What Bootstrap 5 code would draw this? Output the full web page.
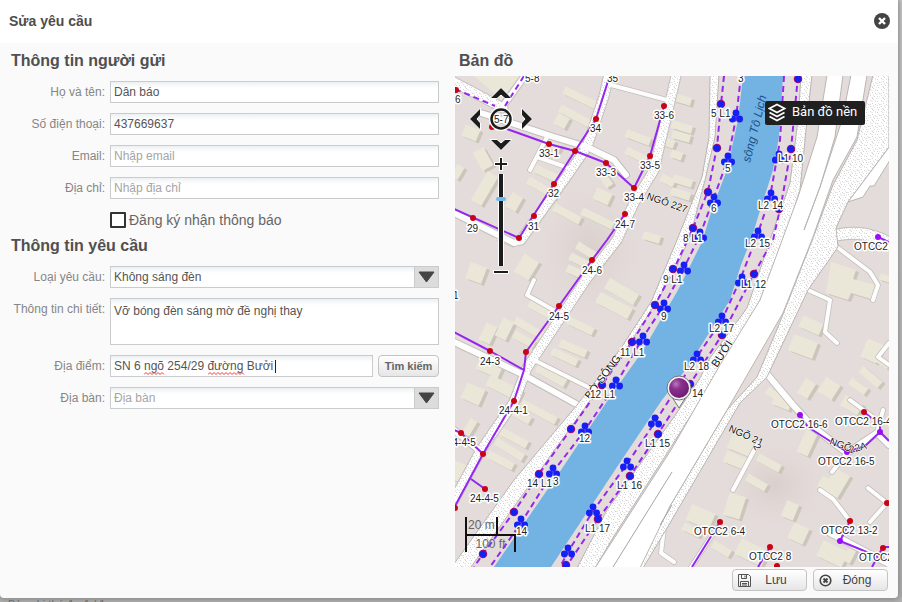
<!DOCTYPE html>
<html lang="vi">
<head>
<meta charset="utf-8">
<meta name="viewport" content="width=device-width, initial-scale=1">
<title>Sửa yêu cầu</title>
<link rel="stylesheet" href="https://cdn.jsdelivr.net/npm/bootstrap@5.3.0/dist/css/bootstrap.min.css">
<style>
body { font-family: "Liberation Sans", Arial, sans-serif; font-size: 12px; line-height: 16px; color: #555; background: linear-gradient(#d4d4d4, #b4b4b4); }
.dialog { margin-right: 4px; background: #fafafa; border-radius: 0 0 4px 4px; box-shadow: 0 0 6px 2px #888; }
.dialog-head { height: 43px; padding: 0 8px 2px 9px; background: #fff; }
.dialog-title { font-size: 14px; line-height: 20px; font-weight: 700; color: #4d4d4d; margin: 0; }
.form-side { padding: 8px 10px 0 11px; }
.map-side { padding: 8px 9px 0 6px; }
.section-title { font-size: 16px; line-height: 20px; font-weight: 700; color: #505050; margin: 0 0 10px; }
.map-side .section-title { margin: 0 0 5px 4px; }
.field { display: grid; grid-template-columns: 94px minmax(0, 1fr); column-gap: 5px; margin-bottom: 10px; }
.field-label { color: #868686; text-align: right; line-height: 22px; white-space: nowrap; justify-self: end; }
.field .form-control, .field .form-select { height: 22px; font-size: 12px; line-height: 16px; color: #555; padding: 2px 3px; border: 1px solid #c9cccf; border-radius: 0; background-color: #fff; background-image: linear-gradient(#edf0f2, #fff 6px); }
.field textarea.form-control { height: 47px; padding-top: 4px; resize: none; }
.field .form-control::placeholder { color: #a5a5a5; opacity: 1; }
.field .form-select { padding-right: 28px; background-image: url("data:image/svg+xml,%3Csvg xmlns='http://www.w3.org/2000/svg' width='24' height='20'%3E%3Cpath fill='%23dcdcdc' d='M0 0h24v20H0z'/%3E%3Cpath fill='%23cacaca' d='M0 0h1v20H0z'/%3E%3Cpath fill='%23454545' stroke='%23454545' stroke-linejoin='round' d='M5 5h15l-7.500 10z'/%3E%3C/svg%3E"), linear-gradient(#edf0f2, #fff 6px); background-position: right 0 top 0, 0 0; background-size: 24px 20px, auto; background-repeat: no-repeat; }
.field .form-select.is-empty { color: #a5a5a5; }
.notify { gap: 3px; height: 22px; margin: 0 0 5px 99px; font-size: 14px; color: #666; }
.notify .form-check-input { width: 16px; height: 16px; margin: 0; border: 2px solid #333; border-radius: 1px; background-color: #fff; float: none; }
.soft-btn { height: 22px; padding: 0; font-size: 12px; line-height: 18px; color: #444; border: 1px solid #c4c4c4; border-radius: 4px; background: linear-gradient(#fff, #e6e6e6); }
.place-row { gap: 5px; }
.find-btn { width: 61px; font-size: 11px; font-weight: 700; color: #666; }
.foot-btn { width: 75px; padding: 0 5px; }
.misspelt { position: absolute; top: 17px; height: 3px; color: #f33; }
.misspelt path { stroke: currentColor; fill: none; }
.caret { position: absolute; left: 165px; top: 5px; width: 1px; height: 13px; background: #222; }
.dialog-foot { padding: 2px 10px 7px; gap: 6px; }
.map-box { background: #e4dcda; }
.layer-btn { position: absolute; top: 25px; right: 24px; width: 100px; height: 24px; padding: 0 3px 3px; gap: 6px; border: 0; border-radius: 2px; background: #202020; color: #fff; font: 400 13px/16px Roboto, sans-serif; white-space: nowrap; }
.layer-btn svg { flex: none; margin-top: 3px; }
.map-tools { position: absolute; left: 7px; top: 4px; width: 78px; }
.pan-pad { display: grid; grid-template-columns: repeat(3, 26px); grid-auto-rows: 26px; }
.tool-btn { border: 0; padding: 0; background: none; display: flex; align-items: center; justify-content: center; }
.pan-up { grid-column: 2; }
.pan-left { grid-column: 1; }
.pan-down { grid-column: 2; }
.zoom-btn { width: 16px; height: 12px; }
.zoom-rail { width: 16px; height: 92px; margin: 4px 0 0; display: flex; align-items: center; justify-content: center; }
.zoom-range { flex: none; width: 92px; height: 12px; margin: 0; appearance: none; background: linear-gradient(transparent 3px, #fff 3px 4px, #1c1c1c 4px 8px, #fff 8px 9px, transparent 9px); transform: rotate(-90deg); }
.zoom-range::-webkit-slider-thumb { appearance: none; width: 4px; height: 10px; border-radius: 2px; background: #6fb9ea; }
.scale-bar { position: absolute; left: 10px; bottom: 15px; font-size: 12px; line-height: 16px; color: #666; }
.scale-m { width: 33px; height: 19px; padding-left: 1px; border: solid #111; border-width: 0 2px 2px; white-space: nowrap; }
.scale-ft { width: 51px; height: 18px; border: solid #111; border-width: 0 2px; text-align: center; white-space: nowrap; }
.scale-ft::before { content: ""; display: block; height: 2px; margin-top: -2px; background: #111; }
.page-count { padding: 0 8px; font-size: 11px; line-height: 12px; color: #555; }
.walk { fill: url(#grit); stroke: #b9b5b2; stroke-width: 1; }
.lane { fill: none; stroke-linejoin: round; stroke-linecap: round; }
.cable { fill: none; stroke: #9526f0; stroke-width: 2; stroke-linejoin: round; }
.tag text { font: 10px "Liberation Sans", Arial, sans-serif; fill: #222; stroke: #fff; stroke-width: 3px; stroke-linejoin: round; paint-order: stroke; }
.street text { font: 10px "Liberation Sans", Arial, sans-serif; fill: #111; stroke: #fff; stroke-width: 1px; paint-order: stroke; }
.street .main-road { font-size: 11px; }
.street .water { font-size: 12px; font-style: italic; fill: #1d4f86; stroke: none; }
.houses { fill: #ebe7d8; stroke: #ebe7d8; filter: drop-shadow(3px 2px 0 #cbc5bb); }
</style>
<script src="https://cdn.jsdelivr.net/npm/bootstrap@5.3.0/dist/js/bootstrap.bundle.min.js"></script>
</head>
<body class="vh-100 overflow-hidden">
<main class="dialog position-relative">
  <header class="dialog-head d-flex align-items-center justify-content-between">
    <h1 class="dialog-title">Sửa yêu cầu</h1>
    <button type="button" class="tool-btn" aria-label="Đóng hộp thoại"><svg width="16" height="16" viewBox="0 0 16 16"><circle cx="8" cy="8" r="8" fill="#444"/><path d="M5 5l6 6M11 5l-6 6" stroke="#fff" stroke-width="2.400"/></svg></button>
  </header>

  <div class="row g-0">
    <form class="col-6 form-side" id="request">
      <h2 class="section-title">Thông tin người gửi</h2>
      <div class="field"><label class="field-label" for="name">Họ và tên:</label><input class="form-control" id="name" value="Dân báo"></div>
      <div class="field"><label class="field-label" for="phone">Số điện thoại:</label><input class="form-control" id="phone" value="437669637"></div>
      <div class="field"><label class="field-label" for="email">Email:</label><input class="form-control" id="email" placeholder="Nhập email"></div>
      <div class="field"><label class="field-label" for="address">Địa chỉ:</label><input class="form-control" id="address" placeholder="Nhập địa chỉ"></div>
      <div class="notify d-flex align-items-center"><input class="form-check-input" type="checkbox" id="notify"><label for="notify">Đăng ký nhận thông báo</label></div>

      <h2 class="section-title">Thông tin yêu cầu</h2>
      <div class="field"><label class="field-label" for="kind">Loại yêu cầu:</label><select class="form-select" id="kind"><option>Không sáng đèn</option></select></div>
      <div class="field"><label class="field-label" for="detail">Thông tin chi tiết:</label><textarea class="form-control" id="detail" spellcheck="false">Vỡ bóng đèn sáng mờ đề nghị thay</textarea></div>
      <div class="field"><label class="field-label" for="place">Địa điểm:</label>
        <div class="d-flex place-row">
          <div class="position-relative flex-grow-1">
            <input class="form-control" id="place" value="SN 6 ngõ 254/29 đường Bưởi" spellcheck="false">
            <svg class="misspelt" style="left:34px" width="21" viewBox="0 0 21 3"><path d="M0 2.500l2-2 2 2 2-2 2 2 2-2 2 2 2-2 2 2 2-2 2 2"/></svg>
            <svg class="misspelt" style="left:98px" width="37" viewBox="0 0 37 3"><path d="M0 2.500l2-2 2 2 2-2 2 2 2-2 2 2 2-2 2 2 2-2 2 2 2-2 2 2 2-2 2 2 2-2 2 2 2-2 2 2"/></svg>
            <span class="caret"></span>
          </div>
          <button type="button" class="btn soft-btn find-btn">Tìm kiếm</button>
        </div>
      </div>
      <div class="field"><label class="field-label" for="area">Địa bàn:</label><select class="form-select is-empty" id="area"><option>Địa bàn</option></select></div>
    </form>

    <section class="col-6 map-side">
      <h2 class="section-title">Bản đồ</h2>
      <div class="map-box position-relative overflow-hidden">
        <svg class="d-block w-100" viewBox="455 76 434 491" role="img" aria-label="Bản đồ">
          <defs>
            <pattern id="grit" width="11" height="11" patternUnits="userSpaceOnUse">
              <path fill="#fff" d="M0 0h11v11H0z"/>
              <path fill="#d4d4d4" d="M1 1h1v1H1zM4 0h1v1H4zM8 2h1v1H8zM3 4h1v1H3zM6 5h1v1H6zM10 5h1v1h-1zM1 7h1v1H1zM5 8h1v1H5zM8 8h1v1H8zM3 10h1v1H3zM9 10h1v1H9z"/>
              <path fill="#e8e8e8" d="M2 2h2v1H2zM6 1h1v2H6zM9 4h1v1H9zM0 5h2v1H0zM4 6h1v2H4zM7 6h2v1H7zM2 9h2v1H2zM7 10h1v1H7zM10 8h1v1h-1z"/>
            </pattern>
            <radialGradient id="tone"><stop offset="0" stop-color="#d9cfcd"/><stop offset="1" stop-color="#e4dcda" stop-opacity="0"/></radialGradient>
            <radialGradient id="ball" cx=".35" cy=".3" r=".75"><stop offset="0" stop-color="#b77abb"/><stop offset=".35" stop-color="#8b308f"/><stop offset="1" stop-color="#6b1c70"/></radialGradient>
            <g id="lamp" fill="#1420f5"><circle cy="-4" r="3.400"/><circle cx="-3.600" cy="2" r="3.400"/><circle cx="3.600" cy="2" r="3.400"/></g>
          </defs>
          <path fill="#e4dcda" d="M455 76h434v491H455z"/>
          <ellipse cx="775" cy="485" rx="60" ry="50" fill="url(#tone)"/><ellipse cx="590" cy="250" rx="60" ry="80" fill="url(#tone)"/>

          <!-- houses, drawn as thick bars -->
          <g class="houses">
            <path stroke="none" d="M474 76h46l-18 24zM831 262l25 8-3 9 22 6-4 14-20-6-3 7-22-7z"/>
            <path fill="none" stroke-width="8" d="M564 90l33 16M560 108l30 16M626 133l24 9M626 150l26 13M661 140l13 5M661 177l13 7M528 180l28 16M534 168l26 12M545 142l15 7M554 207l26 14M582 211l31 15M643 235l17 5M674 97l17 5M672 124l20 6M672 134l18 5M671 153l11 4M673 178l19 6M671 191l19 6M577 245l21 13M570 256l22 11M567 268l18 8M529 303l21 12M568 320l25 12M515 320l28 16M514 334l20 11M560 343l26 11M552 351l25 12M522 403l34 18M512 411l18 10M501 431l26 14M496 441l27 17M488 454l25 13M474 420l-10 17M861 369l19 16M850 381l16 11M767 390l18 12M747 477l19 11M683 526l17 8M713 544l17 10M855 545l-9 17M877 358l12 8M758 457l22 12M773 400l17 7M454 178l7-12M610 186l-10-14M495 235l17 7"/>
            <path fill="none" stroke-width="12" d="M493 174l-17 29M556 118l11 6M595 193l15 7M478 150l10 18M464 130l14 6M607 283l29 17M598 297l32 17M509 320l-9 18M492 325l-8 17M538 366l28 16M478 363l22 10M488 380l32 16M461 463l-7 17M801 321l20 9M811 381l-9 15M843 400l17 10M812 432l-10 22M725 456l20 8M820 481l12 6M518 195l-8 14"/>
            <path fill="none" stroke-width="17" d="M532 258l-11 18M468 270l16 6M464 390l18 8M791 342l24 9M876 342l-8 18M822 384l14 9M730 440l22 9M738 495l-7 22M689 512l23 10M784 508l12 5M791 530l15 7M843 472l-13 22M820 548l25 12M738 546l27 13M889 276l-2 6"/>
          </g>

          <!-- side streets: casing, then surface -->
          <g>
            <g class="lane" stroke="#c3bebb">
              <path stroke-width="11" d="M450 80l53 28M676 76l-22 94-20 33-17 37-30 38-36 54-24 36-13 34-33 48-27 50M609 74l-5 22-17 51-23 33-43 60"/>
              <path stroke-width="8" d="M526 74l-23 32M481 113l73 24 33 10 27 13 12 15M454 213l60 30 7-2M454 342l70 33 54 30M767 374l26 31 20 22 34 26 30-20 12 12M830 533l59 31M454 430l27 22"/>
              <path stroke-width="13" d="M837 235c18-4 34-2 56 10"/>
              <path stroke-width="5.500" d="M611 85l56 15M534 360l56 28M534 280l-7 15 30 17M547 137l-17 33M537 157l29 10M837 247l33 25 8 13-5 15M808 290l22 10-5 32 12 11M889 343l-11 14 11 8M883 410l-6 23M850 400l27 20M847 453l-15 19M758 443l-25 47M820 490l13 9 17 22M868 488l19 15-17 19M720 523l-30 46M664 528l-3 25 13 9"/>
            </g>
            <g class="lane" stroke="#fdfdfd">
              <path stroke="url(#grit)" stroke-width="9" d="M450 80l53 28M676 76l-22 94-20 33-17 37-30 38-36 54-24 36-13 34-33 48-27 50M609 74l-5 22-17 51-23 33-43 60"/>
              <path stroke-width="6" d="M526 74l-23 32M481 113l73 24 33 10 27 13 12 15M454 213l60 30 7-2M454 342l70 33 54 30M767 374l26 31 20 22 34 26 30-20 12 12M830 533l59 31M454 430l27 22"/>
              <path stroke="url(#grit)" stroke-width="11" d="M837 235c18-4 34-2 56 10"/>
              <path stroke-width="4" d="M611 85l56 15M534 360l56 28M534 280l-7 15 30 17M547 137l-17 33M537 157l29 10M837 247l33 25 8 13-5 15M808 290l22 10-5 32 12 11M889 343l-11 14 11 8M883 410l-6 23M850 400l27 20M847 453l-15 19M758 443l-25 47M820 490l13 9 17 22M868 488l19 15-17 19M720 523l-30 46M664 528l-3 25 13 9"/>
            </g>
          </g>

          <!-- river and its banks -->
          <path fill="#72b3e4" d="M743 76L738 120L727 170L713 206L702 242L678 290L642 352L610 397L561 470L494 567H551L617 467L662 400L687 368L730 300L741 265L752 237L758 217L773 170L779 137L783 76z"/>
          <path class="walk" d="M710 75L709 137L702 177L677 240L651 302L621 348L577 405L514 480L454 564V580L471 567L521 497L589 402L624 352L654 306L674 272L690 237L705 180L715 137L719 75z"/>
          <path class="walk" d="M801 75L798 120L790 183L770 240L747 308L710 358L700 378L674 417L607 510L577 568H595L614 536L671 447L700 401L730 354L760 300L785 240L800 190L807 120L812 75z"/>

          <!-- highways -->
          <path class="walk" d="M873 75L862 120L857 140L833 185L813 238L780 322L757 377L727 410L660 523L636 568H643L670 523L740 403L767 377L808 290L838 247L836 228L848 202L889 147V75z"/>
          <path fill="#fff" stroke="#b9b5b2" d="M827 75L817 137L798 197L760 300L720 365L671 450L595 568H640L670 506L727 410L783 313L813 237L833 180L857 137L867 75H851L842 120L820 187L804 230L820 187L835 137L843 75z"/>
          <path fill="#fff" stroke="#b9b5b2" d="M890 146L848 202L863 197L870 186L874 186L890 160z"/>
          <path fill="none" stroke="#a5a5a5" d="M672 472L613 567M672 505l-12 20"/>

          <!-- power cables -->
          <g class="cable">
            <path d="M454 209l65 29 56-87 21-32 13-41M507 129l42 15 26 7 31 12 28 25 16-32 14-50M625 214l-18 26-15 20-33 46-33 46-2 18-10 31-31 53-29 54M454 332l36 19 34 19M454 430l7 3 22 21M471 479l14 10M878 237l11 5M800 415l8 12 39 25 18-6 15-14v-7l-16-13M880 432l9 9M720 522l-28 45M770 547l-12 20M850 521l-10 20 49 20M889 547h-6l-11 20"/>
            <g stroke-dasharray="6 4">
              <path d="M455 89l40 17M524 76l-19 30"/>
              <path d="M724 76L721 104L717 147L708 191L693 228L674 269L655 305L632 342L602 385L571 429L539 474L514 512L483 554L474 567"/>
              <path d="M741 76L736 118L728 159L713 200L700 235L684 268L664 305L642 339L616 384L585 430L553 472L521 523L490 567"/>
              <path d="M784 76L780 140L777 158L770 197L757 236L740 280L722 320L696 358L655 422L627 464L593 511L568 552L560 567"/>
              <path d="M798 76L791 149L781 205L773 240L754 274L722 335L690 384L658 434L630 476L598 519L566 567"/>
            </g>
          </g>
          <g fill="none" stroke-linecap="round">
            <path stroke="#c80414" stroke-width="6" d="M549 144h0M575 151h0M596 119h0M606 163h0M634 188h0M650 156h0M664 106h0M625 214h0M554 184h0M534 216h0M519 238h0M473 218h0M456 90h0M492 127h0M592 260h0M559 306h0M526 352h0M490 351h0M514 401h0M461 433h0M483 454h0M485 489h0M455 508h0M864 412h0M720 522h0M770 547h0M777 566h0M850 521h0M887 503h0M883 548h0"/>
            <path stroke="#9a0cf5" stroke-width="6" d="M878 237h0M800 415h0M880 432h0M847 452h0M840 541h0"/>
            <path stroke="#a01070" stroke-width="8.500" d="M721 104h0M717 148h0M708 192h0M693 228h0M673 269h0M655 305h0M632 342h0M602 385h0M571 429h0M539 474h0M514 512h0M483 554h0M798 79h0M791 149h0M779 209h0M754 274h0M722 335h0M690 384h0M658 434h0M630 476h0M598 519h0M566 565h0"/>
            <path stroke="#1420f5" stroke-width="6.500" d="M721 104h0M717 148h0M708 192h0M693 228h0M673 269h0M655 305h0M632 342h0M602 385h0M571 429h0M539 474h0M514 512h0M483 554h0M798 79h0M791 149h0M779 209h0M754 274h0M722 335h0M690 384h0M658 434h0M630 476h0M598 519h0M566 565h0"/>
          </g>
          <g>
            <use href="#lamp" x="736" y="117"/><use href="#lamp" x="728" y="160"/><use href="#lamp" x="714" y="201"/><use href="#lamp" x="700" y="236"/><use href="#lamp" x="684" y="269"/><use href="#lamp" x="664" y="307"/><use href="#lamp" x="643" y="340"/><use href="#lamp" x="616" y="384"/><use href="#lamp" x="585" y="430"/><use href="#lamp" x="553" y="472"/><use href="#lamp" x="521" y="523"/>
            <use href="#lamp" x="779" y="158"/><use href="#lamp" x="771" y="197"/><use href="#lamp" x="758" y="235"/><use href="#lamp" x="742" y="281"/><use href="#lamp" x="722" y="320"/><use href="#lamp" x="697" y="358"/><use href="#lamp" x="655" y="422"/><use href="#lamp" x="627" y="465"/><use href="#lamp" x="593" y="511"/><use href="#lamp" x="568" y="552"/>
          </g>

          <g class="street">
            <text transform="translate(646 199) rotate(19)">NGÕ 227</text>
            <text class="main-road" transform="translate(590 400) rotate(-53)">BỜ SÔNG</text>
            <text class="main-road" transform="translate(717 368) rotate(-57)">BƯỞI</text>
            <text transform="translate(728 431) rotate(24)">NGÕ 21</text>
            <text transform="translate(753 446) rotate(62)">2</text>
            <text transform="translate(829 444) rotate(20)">NGÕ</text>
            <text transform="translate(850 453) rotate(-14)">22A</text>
            <text class="water" transform="translate(750 163) rotate(-76)">sông Tô Lịch</text>
          </g>
          <g class="tag">
            <text x="525" y="82">5-8</text><text x="607" y="82">35</text><text x="654" y="119">33-6</text><text x="590" y="132">34</text><text x="539" y="157">33-1</text><text x="596" y="176">33-3</text><text x="640" y="169">33-5</text><text x="624" y="201">33-4</text><text x="615" y="228">24-7</text><text x="548" y="197">32</text><text x="528" y="230">31</text><text x="467" y="232">29</text><text x="582" y="274">24-6</text><text x="549" y="320">24-5</text><text x="480" y="365">24-3</text><text x="499" y="414">24-4-1</text><text x="447" y="446">24-4-5</text><text x="470" y="502">24-4-5</text><text x="446" y="103">5-6</text><text x="453" y="299">1</text><text x="494" y="123">5-7</text>
            <text x="711" y="117">5 L1</text><text x="738" y="82">3</text><text x="725" y="172">5</text><text x="711" y="212">6</text><text x="683" y="242">8 L1</text><text x="778" y="162">L1 10</text><text x="758" y="209">L2 14</text><text x="745" y="247">L2 15</text><text x="663" y="283">9 L1</text><text x="661" y="320">9</text><text x="620" y="356">11 L1</text><text x="590" y="398">12 L1</text><text x="741" y="288">L1 12</text><text x="709" y="332">L2 17</text><text x="684" y="370">L2 18</text><text x="692" y="397">14</text><text x="579" y="442">12</text><text x="553" y="485">3</text><text x="527" y="487">14 L1</text><text x="516" y="535">14</text><text x="645" y="447">L1 15</text><text x="617" y="489">L1 16</text><text x="585" y="532">L1 17</text>
            <text x="854" y="250">OTCC2</text><text x="771" y="428">OTCC2 16-6</text><text x="835" y="425">OTCC2 16-4</text><text x="818" y="465">OTCC2 16-5</text><text x="694" y="535">OTCC2 6-4</text><text x="749" y="560">OTCC2 8</text><text x="821" y="534">OTCC2 13-2</text><text x="859" y="561">OTCC2</text>
          </g>
          <path fill="#f4f4f4" stroke="#777" d="M672 397l7 11 7-11z"/><circle cx="679" cy="388" r="12" fill="#f4f4f4" stroke="#777"/><circle cx="679" cy="388" r="10" fill="url(#ball)"/>
        </svg>

        <div class="map-tools d-flex flex-column align-items-center">
          <div class="pan-pad">
            <button type="button" class="tool-btn pan-up" aria-label="Lên"><svg width="24" height="14" viewBox="0 0 24 14"><path d="M1 12.500L12 1.500l11 11h-7l-4-3.500-4 3.500z" fill="#1c1c1c" stroke="#fff"/></svg></button>
            <button type="button" class="tool-btn pan-left" aria-label="Trái"><svg width="14" height="24" viewBox="0 0 14 24"><path d="M12.500 1L1.500 12l11 11v-7L9 12l3.500-4z" fill="#1c1c1c" stroke="#fff"/></svg></button>
            <button type="button" class="tool-btn" aria-label="Về giữa"><svg width="24" height="24" viewBox="0 0 24 24" fill="none"><circle cx="12" cy="12" r="10" stroke="#fff" stroke-width="4"/><circle cx="12" cy="12" r="9.500" stroke="#1c1c1c" stroke-width="2.500"/></svg></button>
            <button type="button" class="tool-btn" aria-label="Phải"><svg width="14" height="24" viewBox="0 0 14 24"><path d="M1.500 1l11 11-11 11v-7L5 12 1.500 8z" fill="#1c1c1c" stroke="#fff"/></svg></button>
            <button type="button" class="tool-btn pan-down" aria-label="Xuống"><svg width="24" height="14" viewBox="0 0 24 14"><path d="M1 1.500l11 11 11-11h-7L12 5 8 1.500z" fill="#1c1c1c" stroke="#fff"/></svg></button>
          </div>
          <button type="button" class="tool-btn zoom-btn" aria-label="Phóng to"><svg width="16" height="14" viewBox="0 0 16 14"><path d="M1 7h14M8 0v14" stroke="#fff" stroke-width="4"/><path d="M2 7h12M8 1v12" stroke="#1c1c1c" stroke-width="2"/></svg></button>
          <div class="zoom-rail"><input class="zoom-range" type="range" min="0" max="100" value="74" aria-label="Mức thu phóng"></div>
          <button type="button" class="tool-btn zoom-btn" aria-label="Thu nhỏ"><svg width="16" height="6" viewBox="0 0 16 6"><path d="M0 3h16" stroke="#fff" stroke-width="4"/><path d="M1 3h14" stroke="#1c1c1c" stroke-width="2"/></svg></button>
        </div>

        <button type="button" class="layer-btn d-flex align-items-center"><svg width="18" height="20" viewBox="0 0 18 20" fill="none" stroke="#fff" stroke-width="1.700"><path d="M9 1.500l7.500 4L9 9.500l-7.500-4z"/><path d="M1.500 9.500l7.500 4 7.500-4M1.500 13.500l7.500 4 7.500-4"/></svg>Bản đồ nền</button>

        <div class="scale-bar"><div class="scale-m">20 m</div><div class="scale-ft">100 ft</div></div>
      </div>
    </section>
  </div>

  <footer class="dialog-foot d-flex justify-content-end">
    <button type="submit" form="request" class="btn soft-btn foot-btn d-flex align-items-center"><svg width="13" height="13" viewBox="0 0 13 13" fill="none" stroke="#555"><path d="M.5.500h10l2 2v10H.5z"/><path d="M3.500.500v4h5v-4M7 1.500v2M2.500 12.500v-5h8v5M4 9.500h5M4 11h5"/></svg><span class="flex-grow-1">Lưu</span></button>
    <button type="button" class="btn soft-btn foot-btn d-flex align-items-center"><svg width="13" height="13" viewBox="0 0 13 13" fill="none" stroke="#444"><circle cx="6.500" cy="6.500" r="5.300" stroke-width="1.600"/><path d="M4.500 4.500l4 4M8.500 4.500l-4 4" stroke-width="2"/></svg><span class="flex-grow-1">Đóng</span></button>
  </footer>
</main>
<p class="page-count m-0">Bản ghi thứ 1 - 1 / 1</p>
</body>
</html>
